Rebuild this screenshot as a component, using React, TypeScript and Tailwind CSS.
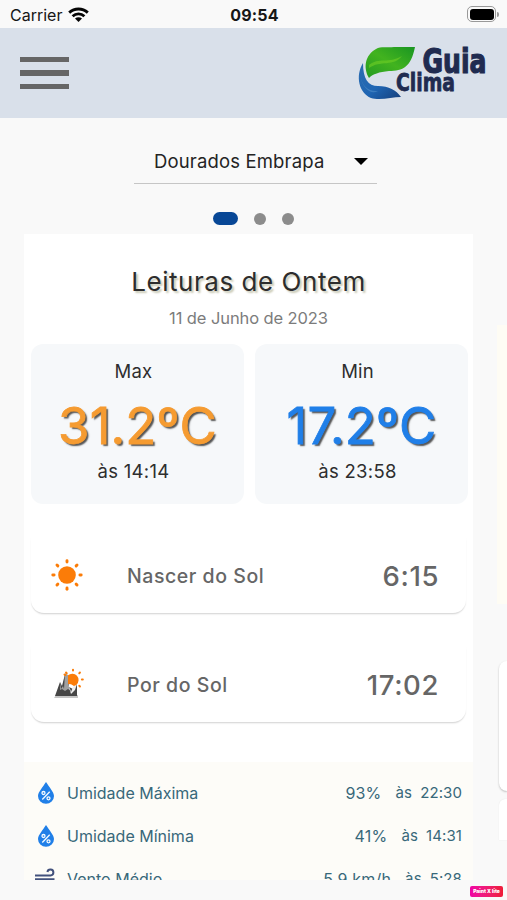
import React from "react";

function Wifi() {
  return (
    <svg width="21" height="16" viewBox="0 0 21 16" className="ml-[6px] shrink-0">
      <g fill="none" stroke="#050505" strokeWidth="2.9">
        <path d="M1.2 5.6C6.6 .7 14.4 .7 19.8 5.6" />
        <path d="M4.6 9.2C8 6.1 13 6.1 16.4 9.2" />
      </g>
      <path d="M10.5 15 7 11.6C9 9.9 12 9.9 14 11.6Z" fill="#050505" />
    </svg>
  );
}

function Logo() {
  return (
    <svg width="130" height="56" viewBox="0 0 130 56" className="overflow-visible">
      <defs>
        <linearGradient id="leaf" x1="0" y1="1" x2="1" y2="0">
          <stop offset="0" stopColor="#239b22" />
          <stop offset=".5" stopColor="#42b31f" />
          <stop offset="1" stopColor="#199522" />
        </linearGradient>
        <linearGradient id="wave" x1="0" y1="0" x2="1" y2="1">
          <stop offset="0" stopColor="#2c6db0" />
          <stop offset=".55" stopColor="#1f65b3" />
          <stop offset="1" stopColor="#153f7c" />
        </linearGradient>
      </defs>
      <path d="M57 2C53 22 45 26 31 26C21 27 15 29 11 33C5 23 7 10 18 4C23 1 29 3 36 2Z" fill="url(#leaf)" />
      <path d="M11 20C20 12 31 19 44 11C36 22 22 15 11 23Z" fill="#6bcc25" opacity=".65" />
      <path d="M5 18C-3 31 1 48 13 53C22 56 34 52 43 52C38 45 31 41 20 41C10 41 5 34 5 18Z" fill="url(#wave)" />
      <path d="M2 29C4 42 11 47 20 46C13 50 4 44 2 29Z" fill="#5a96cb" opacity=".5" />
      <g fill="#202b50" stroke="#202b50" fontFamily="'DejaVu Sans', sans-serif" fontWeight="700">
        <text x="64.5" y="27.5" fontSize="33" textLength="64" lengthAdjust="spacingAndGlyphs" strokeWidth="1.2">Guia</text>
        <text x="38" y="45.5" fontSize="24" textLength="59" lengthAdjust="spacingAndGlyphs" strokeWidth=".8">Clima</text>
      </g>
    </svg>
  );
}

function Sun() {
  return (
    <svg width="34" height="34" viewBox="-17 -17 34 34" className="-ml-px mr-px shrink-0">
      <circle r="8.8" fill="#fb7c08" />
      {[0, 45, 90, 135, 180, 225, 270, 315].map((a) => (
        <path key={a} d="M0-12.9V-14.2" transform={`rotate(${a})`} stroke="#fb7c08" strokeWidth="2.9" strokeLinecap="round" />
      ))}
    </svg>
  );
}

function Sunset() {
  return (
    <svg width="34" height="34" viewBox="0 0 34 34" className="shrink-0">
      <path d="M3 31 5 28H27V31Z" fill="#c4c4c4" />
      <path d="M4 29 9 15 11 19 14 7 17 12 18 20 22 22 26 17 26 29Z" fill="#464646" />
      <path d="M9 15 10 22 12 19 13 22 14 6 17 8 17 17 20 24 17 22 14 24 11 22 9 23Z" fill="#a0a0a0" />
      <path d="M17 17 20 25 22 20 26 17 24 23 20 27Z" fill="#eee" />
      <g transform="translate(22 12.5)">
        <path d="M-5-4.2A6.3 6.3 0 1 1 3.5 5.2L1 6.5-2 4.8-5 4.5Z" fill="#fb7c08" />
        {[-60, -45, 0, 45, 90, 135].map((a) => (
          <path key={a} d="M0-8.9V-9.8" transform={`rotate(${a})`} stroke="#fb7c08" strokeWidth="2" strokeLinecap="round" />
        ))}
      </g>
    </svg>
  );
}

function Drop() {
  return (
    <svg width="18" height="22" viewBox="0 0 18 22" className="shrink-0">
      <path d="M9 0C12 5 17 10 17 14A8 7.8 0 0 1 1 14C1 10 6 5 9 0Z" fill="#207fe8" />
      <g fill="none" stroke="#f5fbff" strokeWidth="1.3">
        <path d="M5.3 17.5 12.7 9.8" />
        <circle cx="6.5" cy="11" r="1.5" />
        <circle cx="11.5" cy="16.3" r="1.5" />
      </g>
    </svg>
  );
}

function Wind() {
  return (
    <svg width="20" height="20" viewBox="0 0 20 20" className="-ml-[3px] -mt-[2px] shrink-0">
      <path d="M0 7.4H15.5A3 3 0 1 0 12.4 4M0 11.3H19.5M0 15H12" fill="none" stroke="#42517c" strokeWidth="2" />
    </svg>
  );
}

function Temp({ label, value, time, color }: { label: string; value: string; time: string; color: string }) {
  return (
    <div className="flex h-[160px] w-[213px] flex-col items-center rounded-[12px] bg-[#f6f8fa]">
      <div className="mt-[13px] h-7 pr-[7px] text-[18.5px] leading-7 tracking-[0.2px] text-[#2e2e2e]">{label}</div>
      <div className={`mt-[10px] h-[62px] whitespace-nowrap pl-px text-[51px] leading-[62px] tracking-[0.1px] [-webkit-text-stroke:0.8px_currentColor] [stroke-linejoin:round] [text-shadow:2px_2px_1.5px_#555] ${color}`}>{value}</div>
      <div className="h-7 pr-[7px] text-[18.5px] leading-7 tracking-[0.3px] text-[#2e2e2e]">{time}</div>
    </div>
  );
}

function SunRow({ icon, label, time }: { icon: React.ReactNode; label: string; time: string }) {
  return (
    <div className="flex h-[76px] w-[435px] items-center rounded-b-[13px] bg-white pl-[20px] pr-[27px] text-[#666] shadow-[0_2px_2px_-1px_#d5d5d5,0_1px_1px_#eee]">
      {icon}
      <span className="ml-[42px] pt-[3px] text-[19.5px] font-medium tracking-[0.55px]">{label}</span>
      <span className="ml-auto pt-[3px] text-[27.5px] font-medium tracking-[0.6px]">{time}</span>
    </div>
  );
}

function Reading({ icon, label, value, time }: { icon: React.ReactNode; label: string; value: string; time: string }) {
  return (
    <div className="flex h-[43px] items-center text-[#38687a]">
      <span className="flex w-[22px] justify-center">{icon}</span>
      <span className="ml-[10px] text-[16px]">{label}</span>
      <span className="ml-auto text-[16px] tracking-[0.2px]">{value}</span>
      <span className="ml-[14px] pt-px text-[15px] tracking-[0.15px]">às</span>
      <span className="ml-[8px] pt-px text-[15px] tracking-[0.1px]">{time}</span>
    </div>
  );
}

export default function App() {
  return (
    <div className="relative flex h-[900px] w-[507px] flex-col overflow-hidden bg-[#f9f9f9] font-[Inter,sans-serif]">
      <div className="grid h-7 grid-cols-3 items-center pl-[10px] pr-[8px] text-[#161616]">
        <div className="flex items-center pt-px text-[16px]">Carrier<Wifi /></div>
        <div className="pt-px text-center text-[16px] font-bold tracking-[0.2px]">09:54</div>
        <div className="flex items-center justify-end">
          <div className="h-[16px] w-[29px] rounded-[5px] border border-[#999] p-[1.5px]">
            <div className="h-full rounded-[3px] bg-black" />
          </div>
          <div className="ml-px h-[5px] w-[2px] rounded-r-full bg-[#999]" />
        </div>
      </div>

      <header className="flex h-[90px] items-center justify-between bg-[#d9e0ea] pl-[20px] pr-[19px]">
        <div className="flex w-[49px] flex-col gap-2">
          <div className="h-[5.5px] bg-[#666]" />
          <div className="h-[5.5px] bg-[#666]" />
          <div className="h-[5.5px] bg-[#666]" />
        </div>
        <Logo />
      </header>

      <div className="ml-[134px] mt-[21px] flex h-[45px] w-[243px] items-center justify-between border-b border-[#c6c6c6] pl-[20px] pr-[9px]">
        <span className="pt-[2px] text-[18.5px] tracking-[0.15px] text-[#242424]">Dourados Embrapa</span>
        <div className="mt-px h-[7px] w-[14px] bg-black [clip-path:polygon(0_0,100%_0,50%_100%)]" />
      </div>

      <div className="ml-[213px] mt-[28px] flex h-[13px] items-center gap-[16px]">
        <div className="h-[12.5px] w-[25px] rounded-full bg-[#084796]" />
        <div className="h-[12px] w-[12px] rounded-full bg-[#8c8c8c]" />
        <div className="h-[12px] w-[12px] rounded-full bg-[#8c8c8c]" />
      </div>

      <main className="mt-[9px] flex h-[646px] gap-[24px] overflow-hidden pl-[24px]">
        <section className="flex w-[449px] shrink-0 flex-col bg-white">
          <h1 className="mt-[29px] h-[38px] text-center text-[26px] leading-[38px] tracking-[0.55px] text-[#2d2d2d] [text-shadow:2px_2px_2px_#c8c8b4]">Leituras de Ontem</h1>
          <p className="mt-[4px] h-[26px] text-center text-[16.5px] leading-[26px] tracking-[-0.1px] text-[#7c7c7c]">11 de Junho de 2023</p>
          <div className="mt-[13px] flex justify-center gap-[11px] pl-[1px]">
            <Temp label="Max" value="31.2ºC" time="às 14:14" color="text-[#f59b31]" />
            <Temp label="Min" value="17.2ºC" time="às 23:58" color="text-[#207fe8]" />
          </div>
          <div className="mt-[33px] flex flex-col gap-[33px] pl-[7px]">
            <SunRow icon={<Sun />} label="Nascer do Sol" time="6:15" />
            <SunRow icon={<Sunset />} label="Por do Sol" time="17:02" />
          </div>
          <div className="mt-[40px] grow bg-[#fdfcf8] pl-[11px] pr-[11px] pt-[9px]">
            <Reading icon={<Drop />} label="Umidade Máxima" value="93%" time="22:30" />
            <Reading icon={<Drop />} label="Umidade Mínima" value="41%" time="14:31" />
            <Reading icon={<Wind />} label="Vento Médio" value="5.9 km/h" time="5:28" />
          </div>
        </section>
        <aside className="flex w-[10px] shrink-0 flex-col">
          <div className="mt-[91px] h-[279px] bg-[#fefcf4]" />
          <div className="ml-[2px] mt-[57px] h-[130px] rounded-l-[10px] bg-white shadow-[0_1px_2px_#bbb]" />
          <div className="ml-[2px] mt-[8px] h-[41px] rounded-tl-[6px] bg-white shadow-[0_0_1px_#ddd]" />
        </aside>
      </main>

      <div className="absolute left-[470px] top-[886px] flex h-[11px] w-[33px] items-center justify-center whitespace-nowrap rounded-[2px] bg-gradient-to-r from-[#f000a5] to-[#ef1b35] text-[5px] font-black text-white">Paint X lite</div>
    </div>
  );
}
